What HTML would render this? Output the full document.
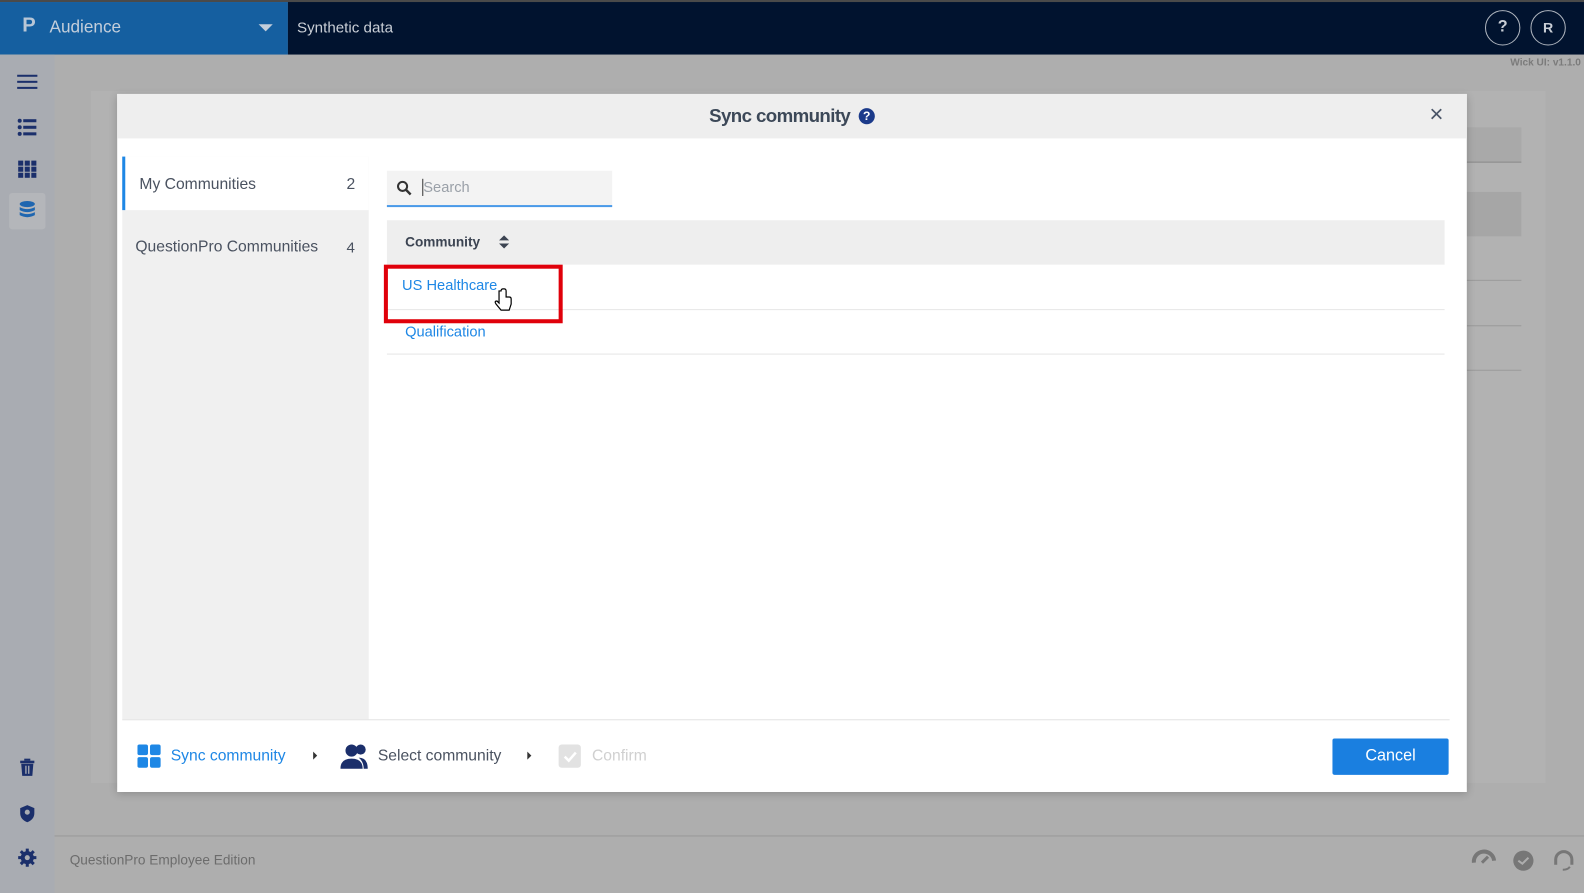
<!DOCTYPE html>
<html><head><meta charset="utf-8"><style>
*{box-sizing:border-box;margin:0;padding:0}
html,body{width:1584px;height:884px;overflow:hidden;background:#aeaeae}
#w{position:absolute;left:0;top:0;width:1568px;height:875px;transform:scale(1.0102);transform-origin:0 0;font-family:"Liberation Sans",sans-serif;font-size:15px}
.abs{position:absolute}
</style></head><body><div id="w">
<!-- header -->
<div class="abs" style="left:0;top:0;width:1568px;height:2px;background:#4a4a4a"></div>
<div class="abs" style="left:0;top:2px;width:285px;height:52px;background:#155fa0"></div>
<div class="abs" style="left:285px;top:2px;width:1283px;height:52px;background:#01132f"></div>
<div class="abs" style="left:22px;top:14px;color:#b8c6d6;font-weight:bold;font-size:20px">P</div>
<div class="abs" style="left:49px;top:17px;color:#c3cedb;font-size:17px">Audience</div>
<div class="abs" style="left:256px;top:24px;width:0;height:0;border-left:7px solid transparent;border-right:7px solid transparent;border-top:7px solid #c3cedb"></div>
<div class="abs" style="left:294px;top:19px;color:#c9ced6;font-size:15px">Synthetic data</div>
<div class="abs" style="left:1470px;top:10px;width:35px;height:35px;border:1.5px solid #b0b6bf;border-radius:50%;color:#c9ced6;font-weight:bold;text-align:center;line-height:32px;font-size:16px">?</div>
<div class="abs" style="left:1515px;top:10px;width:35px;height:35px;border:1.5px solid #b0b6bf;border-radius:50%;color:#c9ced6;font-weight:bold;text-align:center;line-height:32px;font-size:14px">R</div>
<div class="abs" style="left:1495px;top:57px;color:#7b7b7b;font-size:10px;font-weight:bold">Wick UI: v1.1.0</div>
<!-- sidebar -->
<div class="abs" style="left:0;top:54px;width:54px;height:830px;background:#a9acb2"></div>
<svg class="abs" style="left:0;top:54px" width="54" height="830">
<g fill="#1b2f6b">
<rect x="17" y="20" width="20" height="2"/><rect x="17" y="26" width="20" height="2"/><rect x="17" y="32" width="20" height="2"/>
<circle cx="19.5" cy="65.5" r="2"/><circle cx="19.5" cy="72" r="2"/><circle cx="19.5" cy="78.5" r="2"/>
<rect x="23" y="64" width="13" height="3"/><rect x="23" y="70.5" width="13" height="3"/><rect x="23" y="77" width="13" height="3"/>
<rect x="18" y="105" width="5" height="5"/><rect x="24.5" y="105" width="5" height="5"/><rect x="31" y="105" width="5" height="5"/>
<rect x="18" y="111" width="5" height="5"/><rect x="24.5" y="111" width="5" height="5"/><rect x="31" y="111" width="5" height="5"/>
<rect x="18" y="117" width="5" height="5"/><rect x="24.5" y="117" width="5" height="5"/><rect x="31" y="117" width="5" height="5"/>
</g>
<rect x="9" y="137" width="36" height="36" rx="3" fill="#b4b6ba"/>
<g fill="#1f66b0"><ellipse cx="27" cy="148" rx="7.5" ry="3"/><path d="M19.5 151q7.5 4 15 0v3q-7.5 4-15 0z"/><path d="M19.5 156q7.5 4 15 0v3q-7.5 4-15 0z"/></g>
<g fill="#1b2f6b">
<rect x="20" y="699" width="14" height="2.5"/><rect x="24" y="697" width="6" height="2"/><path d="M21 702h12l-1 12h-10z"/>
<path d="M27 743l7 3v5q0 6-7 9q-7-3-7-9v-5z"/>
<circle cx="27" cy="795" r="6.5"/>
</g>
<g fill="#a9acb2"><rect x="25" y="704" width="1.3" height="8"/><rect x="27.8" y="704" width="1.3" height="8"/><circle cx="27" cy="750" r="2.5"/></g>
<g stroke="#1b2f6b" stroke-width="3"><path d="M27 786v18M18 795h18M20.6 788.6l12.8 12.8M33.4 788.6l-12.8 12.8"/></g>
<circle cx="27" cy="795" r="2.5" fill="#a9acb2"/>
</svg>
<!-- background panel -->
<div class="abs" style="left:90px;top:90px;width:1440px;height:685px;background:#b2b2b2"></div>
<div class="abs" style="left:1452px;top:126px;width:54px;height:35px;background:#a9a9a9;border-bottom:1px solid #8a8a8a"></div>
<div class="abs" style="left:1452px;top:190px;width:54px;height:44px;background:#a6a6a6"></div>
<div class="abs" style="left:1452px;top:277px;width:54px;height:1px;background:#9a9a9a"></div>
<div class="abs" style="left:1452px;top:322px;width:54px;height:1px;background:#9a9a9a"></div>
<div class="abs" style="left:1452px;top:366px;width:54px;height:1px;background:#9a9a9a"></div>
<!-- footer bar -->
<div class="abs" style="left:54px;top:827px;width:1530px;height:1px;background:#999"></div>
<div class="abs" style="left:69px;top:844px;color:#6c6c6c;font-size:13.5px">QuestionPro Employee Edition</div>
<svg class="abs" style="left:1455px;top:838px" width="110" height="26">
<path d="M4 16a10 10 0 0 1 20-2" stroke="#777" stroke-width="4" fill="none"/><path d="M12 16l6-6" stroke="#777" stroke-width="3"/>
<circle cx="53" cy="14" r="10" fill="#777"/><path d="M48 14l4 3 6-6" stroke="#aeaeae" stroke-width="2" fill="none"/>
<path d="M85 18v-5a8 8 0 0 1 16 0v5" stroke="#777" stroke-width="3" fill="none"/><path d="M99 20q-2 3-7 3" stroke="#777" stroke-width="2" fill="none"/>
</svg>
<!-- modal -->
<div class="abs" style="left:116px;top:93px;width:1336px;height:691px;background:#fff;box-shadow:0 2px 8px rgba(0,0,0,.2)"></div>
<div class="abs" style="left:116px;top:93px;width:1336px;height:44px;background:#eeeeee"></div>
<div class="abs" style="left:702px;top:104px;color:#3c4858;font-size:18.5px;font-weight:bold;letter-spacing:-0.6px">Sync community</div>
<div class="abs" style="left:850px;top:107px;width:16px;height:16px;border-radius:50%;background:#1b3a8a;color:#fff;font-size:12px;font-weight:bold;text-align:center;line-height:16px">?</div>
<div class="abs" style="left:1415px;top:100px;color:#4a5568;font-size:24px">×</div>
<!-- left panel -->
<div class="abs" style="left:121px;top:155px;width:244px;height:557px;background:#f0f0f0"></div>
<div class="abs" style="left:121px;top:155px;width:244px;height:53px;background:#fff;border-left:3px solid #1e87e5"></div>
<div class="abs" style="left:138px;top:174px;color:#4a5260;font-size:15.5px">My Communities</div>
<div class="abs" style="left:343px;top:174px;color:#4a5260;font-size:15.5px">2</div>
<div class="abs" style="left:134px;top:236px;color:#4a5260;font-size:15.5px">QuestionPro Communities</div>
<div class="abs" style="left:343px;top:237px;color:#4a5260;font-size:15px">4</div>
<!-- search -->
<div class="abs" style="left:383px;top:169px;width:223px;height:36px;background:#f3f3f3;border-bottom:2px solid #4a9ae8"></div>
<svg class="abs" style="left:392px;top:178px" width="16" height="16"><circle cx="6.5" cy="6.5" r="4.5" stroke="#333" stroke-width="2" fill="none"/><path d="M10 10l4.5 4.5" stroke="#333" stroke-width="2.4"/></svg>
<div class="abs" style="left:418px;top:177px;width:1px;height:17px;background:#333"></div>
<div class="abs" style="left:419px;top:178px;color:#9aa0a8;font-size:14.5px">Search</div>
<!-- table -->
<div class="abs" style="left:383px;top:218px;width:1047px;height:44px;background:#eeeeee"></div>
<div class="abs" style="left:401px;top:232px;color:#3c4452;font-size:13.5px;font-weight:bold">Community</div>
<svg class="abs" style="left:493px;top:232px" width="12" height="16"><path d="M1 6l5-5 5 5z M1 9l5 5 5-5z" fill="#3c4452"/></svg>
<div class="abs" style="left:383px;top:306px;width:1047px;height:1px;background:#e6e6e6"></div>
<div class="abs" style="left:383px;top:350px;width:1047px;height:1px;background:#e6e6e6"></div>
<div class="abs" style="left:398px;top:275px;color:#1e87e5;font-size:14.5px">US Healthcare</div>
<div class="abs" style="left:401px;top:321px;color:#1e87e5;font-size:14.5px">Qualification</div>
<div class="abs" style="left:380px;top:262px;width:177px;height:58px;border:4px solid #e0000a"></div>
<svg class="abs" style="left:488px;top:285px" width="20" height="26"><path d="M6 3v12l-2-2q-3 0-1 3l5 6h8l2-6v-5q0-2-2-2l-3 0v-6q0-2-2-2h-1q-2 0-2 2z" fill="#fff" stroke="#000" stroke-width="1.2"/></svg>
<!-- footer -->
<div class="abs" style="left:121px;top:712px;width:1314px;height:1px;background:#e2e2e2"></div>
<svg class="abs" style="left:136px;top:737px" width="24" height="24"><g fill="#1e87e5"><rect x="0" y="0" width="10.5" height="10.5" rx="2"/><rect x="12.5" y="0" width="10.5" height="10.5" rx="2"/><rect x="0" y="12.5" width="10.5" height="10.5" rx="2"/><rect x="12.5" y="12.5" width="10.5" height="10.5" rx="2"/></g></svg>
<div class="abs" style="left:169px;top:740px;color:#1e87e5;font-size:15.5px">Sync community</div>
<div class="abs" style="left:310px;top:744px;border-top:4px solid transparent;border-bottom:4px solid transparent;border-left:4px solid #333"></div>
<svg class="abs" style="left:337px;top:736px" width="28" height="26"><g fill="#1b2f6b"><circle cx="11" cy="7" r="6"/><path d="M0 25q0-10 11-10t11 10z"/><circle cx="20" cy="6" r="5"/><path d="M18 14q9 0 9 11h-4q0-7-5-11z"/></g></svg>
<div class="abs" style="left:374px;top:740px;color:#4a5260;font-size:15.5px">Select community</div>
<div class="abs" style="left:522px;top:744px;border-top:4px solid transparent;border-bottom:4px solid transparent;border-left:4px solid #333"></div>
<div class="abs" style="left:553px;top:737px;width:22px;height:23px;background:#e2e2e2;border-radius:3px"></div>
<svg class="abs" style="left:553px;top:737px" width="22" height="23"><path d="M6 12l4 4 7-8" stroke="#fff" stroke-width="2.5" fill="none"/></svg>
<div class="abs" style="left:586px;top:740px;color:#d0d0d0;font-size:15.5px">Confirm</div>
<div class="abs" style="left:1319px;top:731px;width:115px;height:36px;background:#1a7fe0;border-radius:2px;color:#fff;font-size:16px;text-align:center;line-height:36px">Cancel</div>
</div></body></html>
